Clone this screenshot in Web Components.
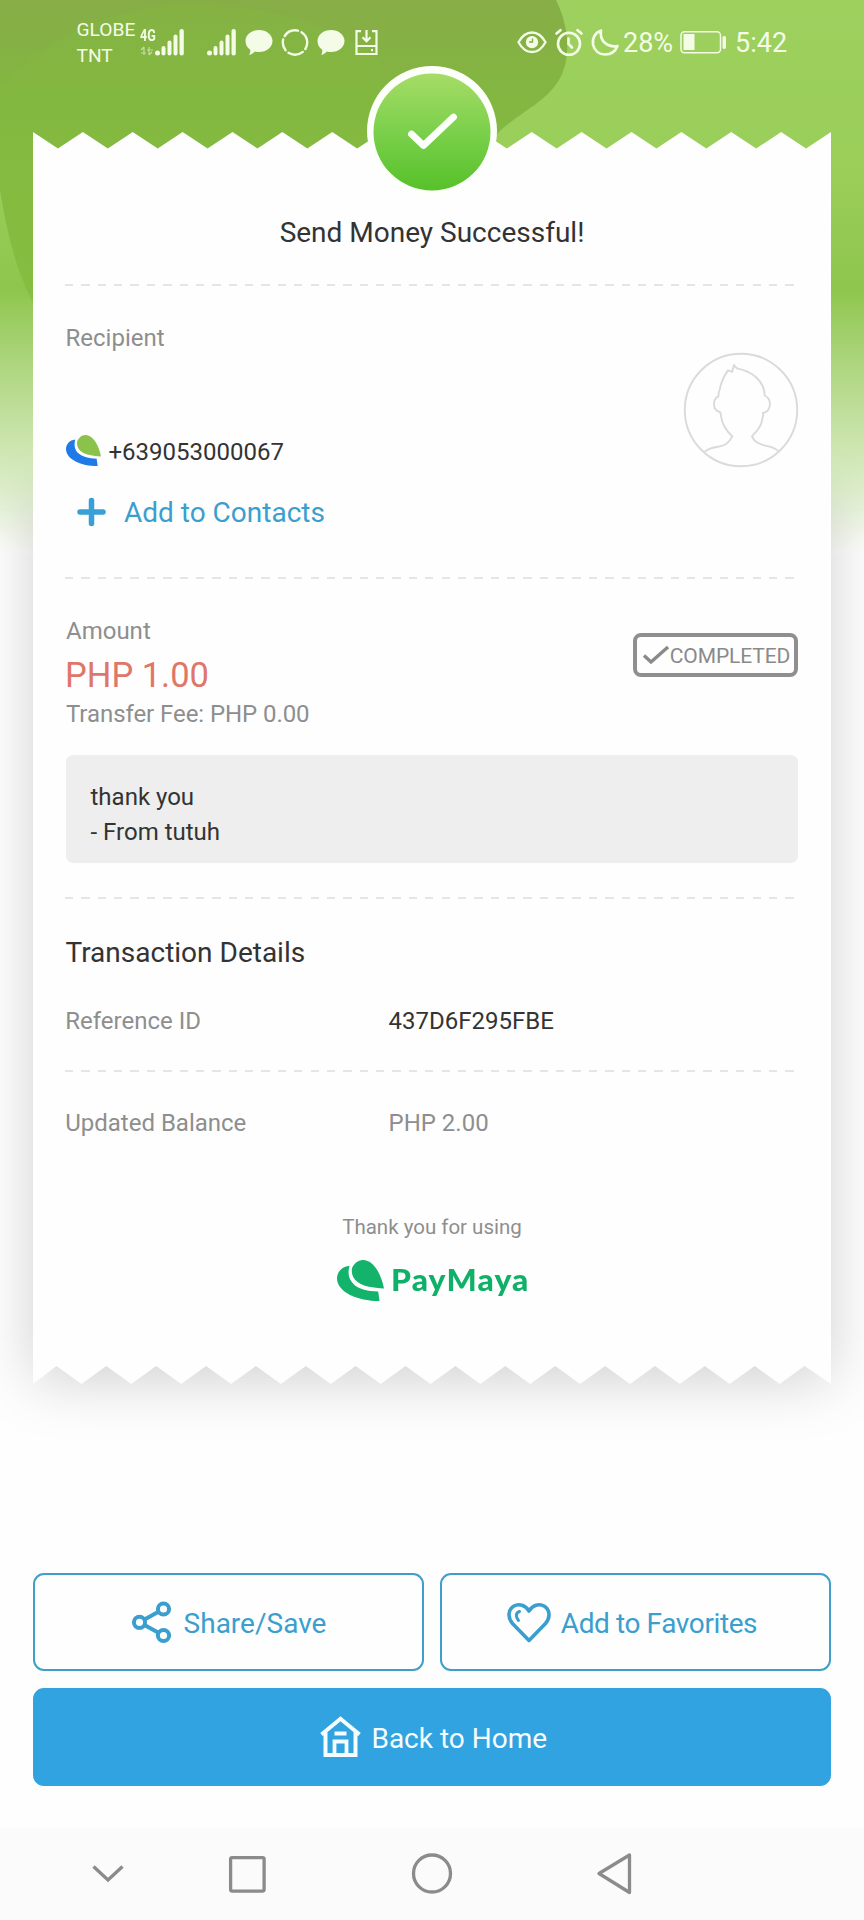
<!DOCTYPE html>
<html lang="en">
<head>
<meta charset="utf-8">
<title>Send Money</title>
<style>
html,body{margin:0;padding:0;background:#fefefe}
body{font-family:Roboto,"Liberation Sans",sans-serif;color:#333}
</style>
</head>
<body>
<receipt-app></receipt-app>
<script>
function define(name, css, html, after) {
  const t = document.createElement('template');
  t.innerHTML = `<style>*{box-sizing:border-box}svg{display:block;flex:none;overflow:visible}${css}</style>${html}`;
  customElements.define(name, class extends HTMLElement {
    connectedCallback() {
      if (this.shadowRoot) return;
      this.attachShadow({mode: 'open'}).appendChild(t.content.cloneNode(true));
      if (after) after(this, this.shadowRoot);
    }
  });
}

define('page-backdrop', `
:host{display:block;position:absolute;inset:0 0 auto 0;height:580px;overflow:hidden}`, `
<svg width="864" height="580">
  <defs>
    <linearGradient id="a" x1="0" y1="0" x2="0" y2="1"><stop offset="0" stop-color="#9dd05e"/><stop offset=".3" stop-color="#9ace59"/><stop offset=".5" stop-color="#8ec64d"/><stop offset="1" stop-color="#8ec64d"/></linearGradient>
    <linearGradient id="b" gradientUnits="userSpaceOnUse" x1="0" y1="0" x2="0" y2="330"><stop offset="0" stop-color="#87ad47"/><stop offset=".3" stop-color="#83b741"/><stop offset="1" stop-color="#85bf40"/></linearGradient>
    <linearGradient id="c" x1="0" y1="0" x2="0" y2="1"><stop offset=".5" stop-color="#fefefe" stop-opacity="0"/><stop offset=".57" stop-color="#fefefe" stop-opacity=".16"/><stop offset=".7" stop-color="#fefefe" stop-opacity=".42"/><stop offset=".84" stop-color="#fefefe" stop-opacity=".7"/><stop offset=".95" stop-color="#fefefe"/></linearGradient>
  </defs>
  <rect width="864" height="580" fill="url(#a)"/>
  <path d="M0 0H556C570 28 571 60 559 80C545 103 520 112 499 132L400 240L50 330C20 290 8 240 0 190Z" fill="url(#b)"/>
  <path d="M0 92C40 40 110 8 180 3C250 4 320 14 380 60V200H33V270C16 240 6 215 0 190Z" fill="#84bd3e" opacity=".3"/>
  <rect width="864" height="580" fill="url(#c)"/>
</svg>`);

define('signal-bars', `:host{display:block}`, `
<svg width="30" height="27" fill="#f4fce8"><circle cx="2.5" cy="24" r="2.5"/><rect x="6.5" y="17" width="4" height="9.5" rx="2"/><rect x="12.5" y="11.500" width="4" height="15" rx="2"/><rect x="18.500" y="5.500" width="4" height="21" rx="2"/><rect x="24.500" y="0" width="4.300" height="26.500" rx="2"/></svg>`);

define('chat-bubble', `:host{display:block}`, `
<svg width="28" height="27" fill="#f4fce8"><path d="M14 1C21.500 1 27.500 5.900 27.500 12S21.500 23 14 23C12.500 23 11 22.900 9.800 22.500C8.500 24.300 6.300 25.800 4 26C5 24.600 5.500 22.500 5.200 20.700C2.200 18.700.5 15.600.5 12C.5 5.900 6.500 1 14 1Z"/></svg>`);

define('status-bar', `
:host{display:flex;justify-content:space-between;height:84px;padding:16px 77px 0 77px;color:#f4fce8;position:relative}
.side{display:flex;align-items:flex-start}
.carrier{font-size:19.200px;line-height:26.500px;width:63px;margin-top:.8px;margin-left:-.5px}
.net{width:15.500px;margin-top:11px}
.net b{display:block;font-size:17px;line-height:16px;transform:scaleX(.74);transform-origin:0 0}
signal-bars,chat-bubble,.i{margin-top:13px}
.t{font-size:27px;line-height:32px;margin-top:10.500px;white-space:nowrap}`, `
<div class="side">
  <div class="carrier">GLOBE<br>TNT</div>
  <div class="net"><b>4G</b><svg width="12" height="9" style="margin:4px 0 0 1px" fill="none" stroke="#d4e8b4" stroke-width="1.200" opacity=".8"><path d="M3 0V8M0 3L3 0M8 8V0M11 5L8 8M0 6H5M6 3H12"/></svg></div>
  <signal-bars></signal-bars>
  <signal-bars style="margin-left:22px"></signal-bars>
  <chat-bubble style="margin-left:8px"></chat-bubble>
  <svg class="i" style="margin-left:8px" width="28" height="27" fill="none" stroke="#f4fce8" stroke-width="2.400" stroke-linecap="round"><circle cx="14" cy="13.500" r="12.200" pathLength="100" stroke-dasharray="20 5 15 5 20 5 25 5" stroke-dashoffset="-14"/></svg>
  <chat-bubble style="margin-left:8px"></chat-bubble>
  <svg class="i" style="margin-left:10px" width="23" height="27" fill="none" stroke="#f4fce8" stroke-width="2.200"><path d="M6 2.200H1.500V25H21.500V2.200H17M1.500 17H21.500M11.500 1V12M7.500 8.200L11.500 12.200L15.500 8.200M16 21.200H18"/></svg>
</div>
<div class="side">
  <svg class="i" width="30" height="27" fill="none" stroke="#f4fce8" stroke-width="2.300"><path d="M1.500 13.200C5 7 9.500 3.500 15 3.500S25 7 28.500 13.200C25 19.500 20.500 23 15 23S5 19.500 1.500 13.200Z"/><circle cx="15" cy="13.200" r="5" fill="#f4fce8"/><path d="M15.500 9.500V13H12" stroke="#84b243" stroke-width="1.500"/></svg>
  <svg class="i" style="margin-left:8px" width="28" height="27" fill="none" stroke="#f4fce8" stroke-width="2.600" stroke-linecap="round"><circle cx="14" cy="14.800" r="11"/><path d="M13.500 9.500V15L17 18.500M1.500 4.500L5.500 1.200M26.500 4.500L22.500 1.200"/></svg>
  <svg class="i" style="margin-left:8px" width="28" height="27" fill="none" stroke="#f4fce8" stroke-width="2.700" stroke-linejoin="round"><path d="M10 1.500C3.500 4 1 10 2 15.500C3.500 22 8.500 25.500 14 25.500C20 25.500 24.500 22 26.500 17C18 19 8 13 10 1.500Z"/></svg>
  <span class="t" style="margin-left:4px;width:57px">28%</span>
  <svg class="i" width="47" height="27" fill="none" stroke="#f4fce8" stroke-width="1.500"><rect x="1" y="2.700" width="39.500" height="21" rx="3.500"/><rect x="3.500" y="5" width="11" height="16" fill="#f4fce8" stroke="none"/><rect x="42.500" y="7" width="3.500" height="13" rx="1.700" fill="#f4fce8" stroke="none"/></svg>
  <span class="t" style="margin-left:8px;width:52px">5:42</span>
</div>`);

define('success-mark', `:host{display:block;width:130px;height:130px}`, `
<svg width="130" height="130"><defs><linearGradient id="g" x1="0" y1="0" x2="0" y2="1"><stop offset="0" stop-color="#a6dc66"/><stop offset=".5" stop-color="#7bd04b"/><stop offset="1" stop-color="#56c12a"/></linearGradient></defs>
<circle cx="65" cy="65" r="65" fill="#fdfffa"/><circle cx="65" cy="66" r="58.500" fill="url(#g)"/><path d="M44.500 68L56.500 79.500L86.500 51" fill="none" stroke="#fdfffa" stroke-width="6.800" stroke-linecap="round" stroke-linejoin="round"/></svg>`);

define('dash-line', `:host{display:block;height:2px;margin-left:-1.500px;width:729px;background:repeating-linear-gradient(90deg,#e5e5e5 0 8.300px,transparent 8.300px 16.370px)}`, ``);

define('leaf-mark', `:host{display:block}svg{width:100%;height:100%}`, `
<svg viewBox="0 0 105 92" preserveAspectRatio="none"><path fill="var(--cap,#8bc34a)" d="M34 17C40 5 49 0 60 0C84 2 99 34 105 64C80 62 60 60 47 50C35 41 31 30 34 17Z"/><path fill="var(--brim,#1f7ae8)" d="M28 13C10 15 0 27 0 42C1 72 45 92 95 92L92 70.500C68 70 50 65 39 56C26 45 23 30 28 13Z"/></svg>`);

define('recipient-panel', `
:host{display:flex;justify-content:space-between;height:291px;padding-top:38px;font-size:24px;line-height:28px}
.label{color:#8e8e8e;margin-left:-.5px}
.phone{display:flex;height:34px;margin-top:83px;line-height:34px;white-space:nowrap}
leaf-mark{width:35px;height:31px;margin-right:8px;margin-left:-.5px}
.add{display:flex;align-items:center;margin-top:27px;height:34px;font-size:28px;color:#3a9fce;padding-left:10px;white-space:nowrap}
.add svg{margin-right:17px;margin-top:-2px}
.avatar{margin-top:29px}`, `
<div>
  <div class="label">Recipient</div>
  <div class="phone"><leaf-mark></leaf-mark><slot name="phone"></slot></div>
  <div class="add"><svg width="31" height="30" stroke="#3a9fd4" stroke-width="5.500" stroke-linecap="round"><path d="M15.500 3.500V26.500M4 15H27"/></svg>Add to Contacts</div>
</div>
<svg class="avatar" width="114" height="114" fill="none" stroke="#dadada" stroke-width="1.900"><circle cx="57" cy="57" r="56.200"/><path d="M20.700 98.400C28 93 36 95 42.400 90.700Q46 88 48.400 83.400C42 78 38 70 37.400 65L36.400 59.400C32 58 30 55 30 51.500C30 48 31.500 44.500 34.400 43.400C34.500 40 34.800 38 35.700 36.700C37 29 40 23 44 17.400L48 18.800L50 12.400L53 15.400C66 18 80 26 80.700 42.500C84 44 86 48 86 51.700C85.500 56 83 59.500 79 60L79.200 62C78.500 65 77.800 68 77.400 70C76 75 72 79 68 83.400Q70 88 74 90C81 94 88 92 94.700 98.400"/></svg>`);

define('status-badge', `
:host{display:flex;align-items:center;width:165px;height:44px;border:4px solid #8f8f8f;border-radius:8px;padding-left:6px;font-size:21px;line-height:24px;color:#8a8a8a;letter-spacing:-.1px}
svg{margin-right:.8px}
span{position:relative;top:1px}`, `
<svg width="26" height="20" fill="none" stroke="#8a8a8a" stroke-width="3.400"><path d="M1 10.500L8 17L25 2"/></svg><span><slot></slot></span>`);

define('amount-panel', `
:host{display:block;padding-top:38px;font-size:24px;line-height:28px}
.row{display:flex;justify-content:space-between}
.g{color:#8e8e8e}
.amt{font-size:34.500px;line-height:41px;color:#de7769;margin:10px 0 4px -1px}
status-badge{margin-top:16px}
.note{margin-top:27px;height:108px;background:#eee;border-radius:7px;padding:25px 24.500px;line-height:35px}`, `
<div class="row"><div><div class="g">Amount</div><div class="amt"><slot name="amount"></slot></div><div class="g" style="letter-spacing:-.07px">Transfer Fee: PHP 0.00</div></div><status-badge>COMPLETED</status-badge></div>
<div class="note">thank you<br>- From tutuh</div>`);

define('detail-row', `
:host{display:grid;grid-template-columns:322.500px 1fr;font-size:24px;line-height:28px;color:#333}
.k{color:#8e8e8e;margin-left:-.8px}`, `<span class="k"><slot name="k"></slot></span><span><slot></slot></span>`);

define('brand-footer', `
:host{display:flex;flex-direction:column;align-items:center;color:#8e8e8e;font-size:20.500px;line-height:27px}
.b{display:flex;height:41px;margin-top:19px;color:#0fb067;align-self:flex-start;margin-left:270.500px}
leaf-mark{width:47px;height:41px;--cap:#14b36b;--brim:#14b36b}
.w{font:900 30px/41px Lato,"Open Sans",sans-serif;letter-spacing:1.100px;transform:scaleX(1.060);transform-origin:0 50%;margin-left:7px;margin-top:-1px}`, `
<span>Thank you for using</span><div class="b"><leaf-mark></leaf-mark><span class="w">PayMaya</span></div>`);

define('receipt-card', `
:host{display:block;position:relative;width:798px;height:1252px;margin:48px auto 0 33px}
.shade{position:absolute;inset:370px 0 4px 0;background:rgba(0,0,0,.18);filter:blur(29px)}
.paper{position:absolute;inset:0;background:#fefefe}
.body{position:relative;padding:84px 33px 0}
success-mark{position:absolute;left:334px;top:-66px}
h1,h2{font-size:28px;line-height:34px;font-weight:400;margin:0;color:#333}
h1{text-align:center;margin-bottom:34px}
h2{margin:37px 0 37px -.5px}`, `
<div class="shade"></div><div class="paper"></div><success-mark></success-mark>
<div class="body">
  <h1>Send Money Successful!</h1>
  <dash-line></dash-line>
  <recipient-panel><span slot="phone">+639053000067</span></recipient-panel>
  <dash-line></dash-line>
  <amount-panel><span slot="amount">PHP 1.00</span></amount-panel>
  <dash-line style="margin-top:34px"></dash-line>
  <h2>Transaction Details</h2>
  <detail-row><span slot="k">Reference ID</span>437D6F295FBE</detail-row>
  <dash-line style="margin-top:35px"></dash-line>
  <detail-row style="margin-top:37px;color:#8e8e8e"><span slot="k">Updated Balance</span>PHP 2.00</detail-row>
  <brand-footer style="margin-top:77px"></brand-footer>
</div>`, (host, root) => {
  const n = 16, w = 798 / n, pts = [];
  for (let i = 0; i <= n; i++) { pts.push(`${i * w}px 0`); if (i < n) pts.push(`${(i + .5) * w}px 16.500px`); }
  for (let i = n; i >= 0; i--) { pts.push(`${i === n ? 798 : Math.max(0, i * w - 1.500)}px 1252px`); if (i > 0) pts.push(`${(i - .5) * w - 1.500}px 1234px`); }
  root.querySelector('.paper').style.clipPath = `polygon(${pts.join(',')})`;
});

define('action-button', `
:host{display:flex;align-items:center;justify-content:center;height:98px;border:2px solid #3f9fca;border-radius:11px;color:#3a9fce;font-size:28px;line-height:34px;white-space:nowrap}
:host([primary]){grid-column:1/-1;background:#31a3e1;border-color:#31a3e1;color:#f6fdff}
.l{padding-top:3px}`, `<slot name="icon"></slot><span class="l"><slot></slot></span>`);

define('action-bar', `
:host{display:grid;grid-template-columns:391px 391px;gap:17px 16px;margin:189px 33px 0}`, `
<action-button><svg slot="icon" style="margin-right:12px" width="41" height="42" fill="none" stroke="#3a9fce" stroke-width="4"><circle cx="8.500" cy="21.300" r="5.600"/><circle cx="32.500" cy="8" r="5.600"/><circle cx="32.500" cy="34.500" r="5.600"/><path d="M13.500 18.500L27.500 10.800M13.500 24L27.500 31.800"/></svg>Share/Save</action-button>
<action-button style="letter-spacing:-.4px;padding-right:7px"><svg slot="icon" style="margin-right:10px" width="44" height="40" fill="none" stroke="#3a9fce" stroke-width="3.600" stroke-linejoin="round"><path d="M22 38.500L5.500 21.500C0 15 1.500 7.500 6.500 4.300C12 1 18.500 3 22 9C25.500 3 32 1 37.500 4.300C42.500 7.500 44 15 38.500 21.500Z"/><path d="M12.500 9.500C8.800 10.500 8.300 15 11.500 18.500" stroke-width="3" stroke-linecap="round"/></svg>Add to Favorites</action-button>
<action-button primary style="padding-left:3px"><svg slot="icon" style="margin-right:10.500px" width="41" height="42" fill="none" stroke="#f6fdff" stroke-width="4"><path d="M1.500 18.500L20.500 2.800L39.500 18.500M5.500 16V39H35.500V16"/><path d="M14.500 39V25.500H26.500V39M14.500 17.500H26.500" stroke-width="3.800"/></svg>Back to Home</action-button>`);

define('nav-bar', `
:host{display:block;margin-top:42px;height:92px;background:#fbfbfb}
.n{display:flex;align-items:center;height:92px;padding-left:92px}`, `
<div class="n">
<svg width="32" height="40" fill="none" stroke="#8b8b8b" stroke-width="3.300"><path d="M1.500 12.500L16 26L30.500 12.500"/></svg>
<svg style="margin-left:105px" width="37" height="37" fill="none" stroke="#8b8b8b" stroke-width="3.300"><rect x="1.600" y="1.600" width="33.500" height="33.500" rx="1.500"/></svg>
<svg style="margin-left:146px" width="40" height="40" fill="none" stroke="#8b8b8b" stroke-width="3.300"><circle cx="20" cy="19.500" r="18.500"/></svg>
<svg style="margin-left:145px" width="35" height="42" fill="none" stroke="#8b8b8b" stroke-width="3.300" stroke-linejoin="round"><path d="M2 20.500L32.500 2V39.500Z"/></svg>
</div>`);

define('receipt-app', `
:host{display:block;position:relative;width:864px;height:1920px;overflow:hidden;background:#fefefe}`, `
<page-backdrop></page-backdrop>
<status-bar></status-bar>
<receipt-card></receipt-card>
<action-bar></action-bar>
<nav-bar></nav-bar>`);
</script>
</body>
</html>
